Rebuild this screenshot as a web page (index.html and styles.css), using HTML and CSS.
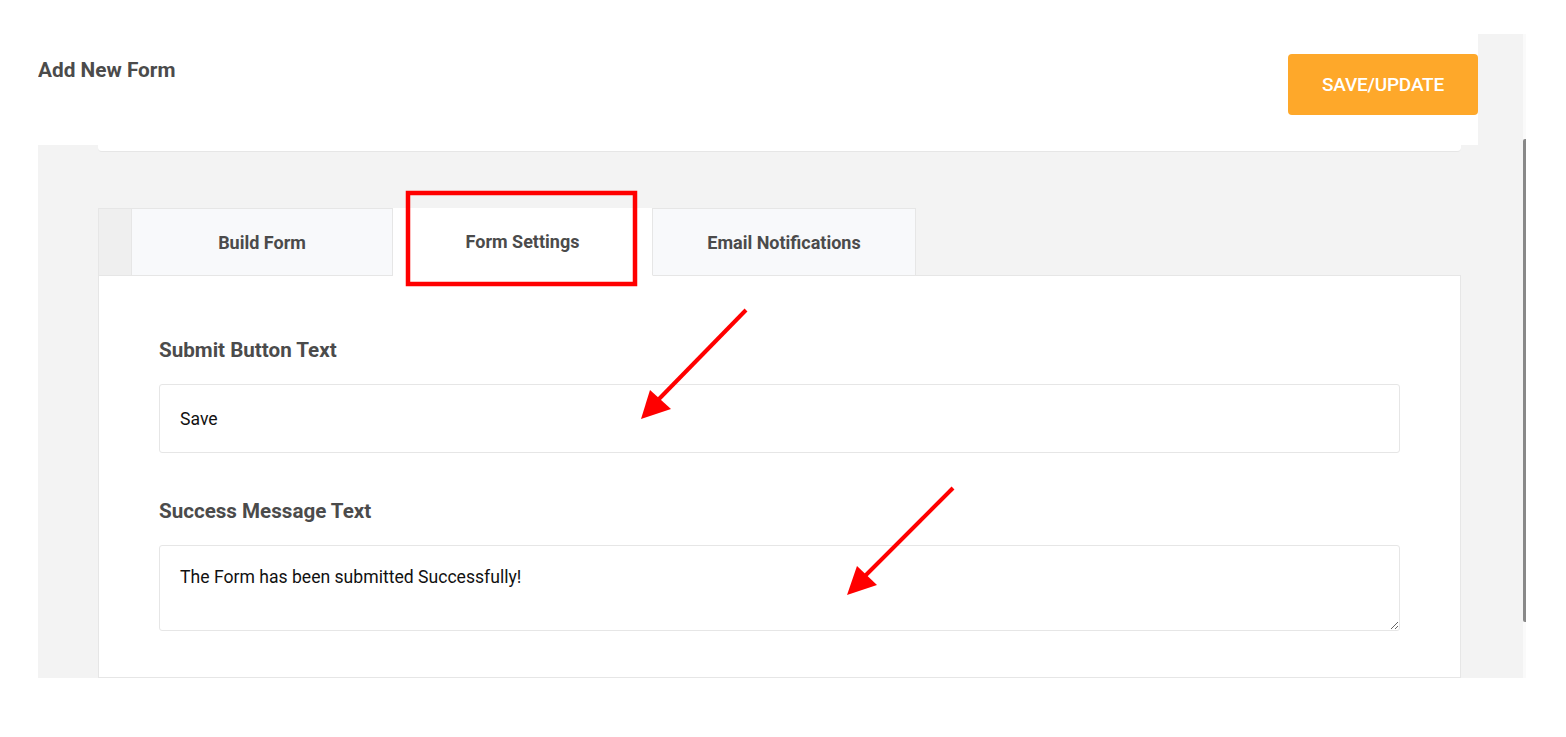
FILE: index.html
```html
<!DOCTYPE html>
<html lang="en">
<head>
<meta charset="utf-8">
<title>Add New Form</title>
<link rel="stylesheet" href="styles.css">
</head>
<body>
<div class="frame">
  <div class="scroll-area">
    <div class="scroll-content">
      <header class="page-header">
        <h1 class="page-title">Add New Form</h1>
        <button class="btn-save" type="button">SAVE/UPDATE</button>
      </header>
      <div class="card-tail"></div>
      <nav class="tabs">
        <span class="tabs-lead"></span>
        <a class="tab tab-build">Build Form</a>
        <a class="tab tab-settings tab-active">Form Settings</a>
        <a class="tab tab-email">Email Notifications</a>
      </nav>
      <section class="panel">
        <div class="field">
          <label class="field-label" for="submit-text">Submit Button Text</label>
          <input id="submit-text" class="field-input" type="text" value="Save">
        </div>
        <div class="field">
          <label class="field-label" for="success-text">Success Message Text</label>
          <textarea id="success-text" class="field-textarea">The Form has been submitted Successfully!</textarea>
        </div>
      </section>
    </div>
    <div class="scrollbar"><div class="scrollbar-thumb"></div></div>
  </div>
</div>
<svg class="annotations" width="1566" height="737" viewBox="0 0 1566 737" aria-hidden="true">
  <rect x="408" y="193" width="227" height="91" fill="none" stroke="#ff0000" stroke-width="4.5"/>
  <line x1="746" y1="310" x2="659" y2="399" stroke="#ff0000" stroke-width="4"/>
  <polygon points="641,419 650,390 671,409" fill="#ff0000"/>
  <line x1="953" y1="488" x2="865" y2="576" stroke="#ff0000" stroke-width="4"/>
  <polygon points="847,595 857,566 877,585" fill="#ff0000"/>
</svg>
</body>
</html>
```
FILE: styles.css
```css
* { box-sizing: border-box; }

html, body {
  margin: 0;
  padding: 0;
  background: #ffffff;
  font-family: Roboto, "Noto Sans", sans-serif;
}

.frame {
  padding: 34px 0 0 38px;
  height: 737px;
}

.scroll-area {
  display: flex;
  width: 1488px;
  height: 644px;
  background: #f3f3f3;
  overflow: hidden;
}

.scroll-content {
  flex: 1;
  display: flex;
  flex-direction: column;
}

.page-header {
  display: flex;
  justify-content: space-between;
  align-items: flex-start;
  width: 1440px;
  height: 111px;
  background: #ffffff;
}

.page-title {
  margin: 26px 0 0 0;
  font-size: 20.8px;
  line-height: 1;
  font-weight: 700;
  color: #4b4b4b;
}

.btn-save {
  margin-top: 20px;
  width: 190px;
  height: 61px;
  border: none;
  border-radius: 4px;
  background: #fea82a;
  color: #ffffff;
  font-family: Roboto, "Noto Sans", sans-serif;
  font-size: 19px;
  font-weight: 500;
  letter-spacing: -0.2px;
}

.card-tail {
  margin: 0 62px 0 60px;
  height: 7px;
  background: #ffffff;
  border-bottom: 1px solid #e6e6e6;
  border-radius: 0 0 4px 4px;
}

.tabs {
  display: flex;
  margin: 56px 62px 0 60px;
  height: 68px;
}

.tabs-lead {
  width: 33px;
  background: #efefef;
  border-top: 1px solid #e6e6e6;
  border-left: 1px solid #e6e6e6;
}

.tab {
  position: relative;
  z-index: 1;
  display: flex;
  align-items: center;
  justify-content: center;
  background: #f8f9fb;
  border: 1px solid #e6e6e6;
  border-left: none;
  font-size: 18px;
  font-weight: 700;
  color: #4b4b4b;
}

.tab-build { width: 262px; border-left: 1px solid #e6e6e6; }
.tab-settings { width: 260px; }
.tab-email { width: 263px; }

.tab-active {
  background: #ffffff;
  border-bottom-color: #ffffff;
  border-top: none;
}

.panel {
  flex: 1;
  margin: -1px 62px 0 60px;
  padding: 63px 60px 0 60px;
  background: #ffffff;
  border: 1px solid #e6e6e6;
}

.field {
  display: flex;
  flex-direction: column;
}

.field + .field { margin-top: 47px; }

.field-label {
  font-size: 20.6px;
  line-height: 22px;
  font-weight: 700;
  color: #4b4b4b;
  margin-bottom: 23px;
}

.field-input,
.field-textarea {
  width: 1241px;
  border: 1px solid #e6e6e6;
  border-radius: 3px;
  background: #ffffff;
  font-family: Roboto, "Noto Sans", sans-serif;
  font-size: 17.6px;
  color: #111111;
  padding: 0 20px;
  outline: none;
}

.field-input {
  height: 69px;
}

.field-textarea {
  height: 86px;
  padding-top: 20px;
  line-height: 22px;
  resize: vertical;
}

.scrollbar {
  width: 5px;
  background: #fafafa;
  padding-top: 105px;
}

.scrollbar-thumb {
  width: 5px;
  height: 483px;
  background: #888888;
  border-radius: 2px;
}

.annotations {
  position: absolute;
  top: 0;
  left: 0;
  z-index: 10;
  pointer-events: none;
}
```
